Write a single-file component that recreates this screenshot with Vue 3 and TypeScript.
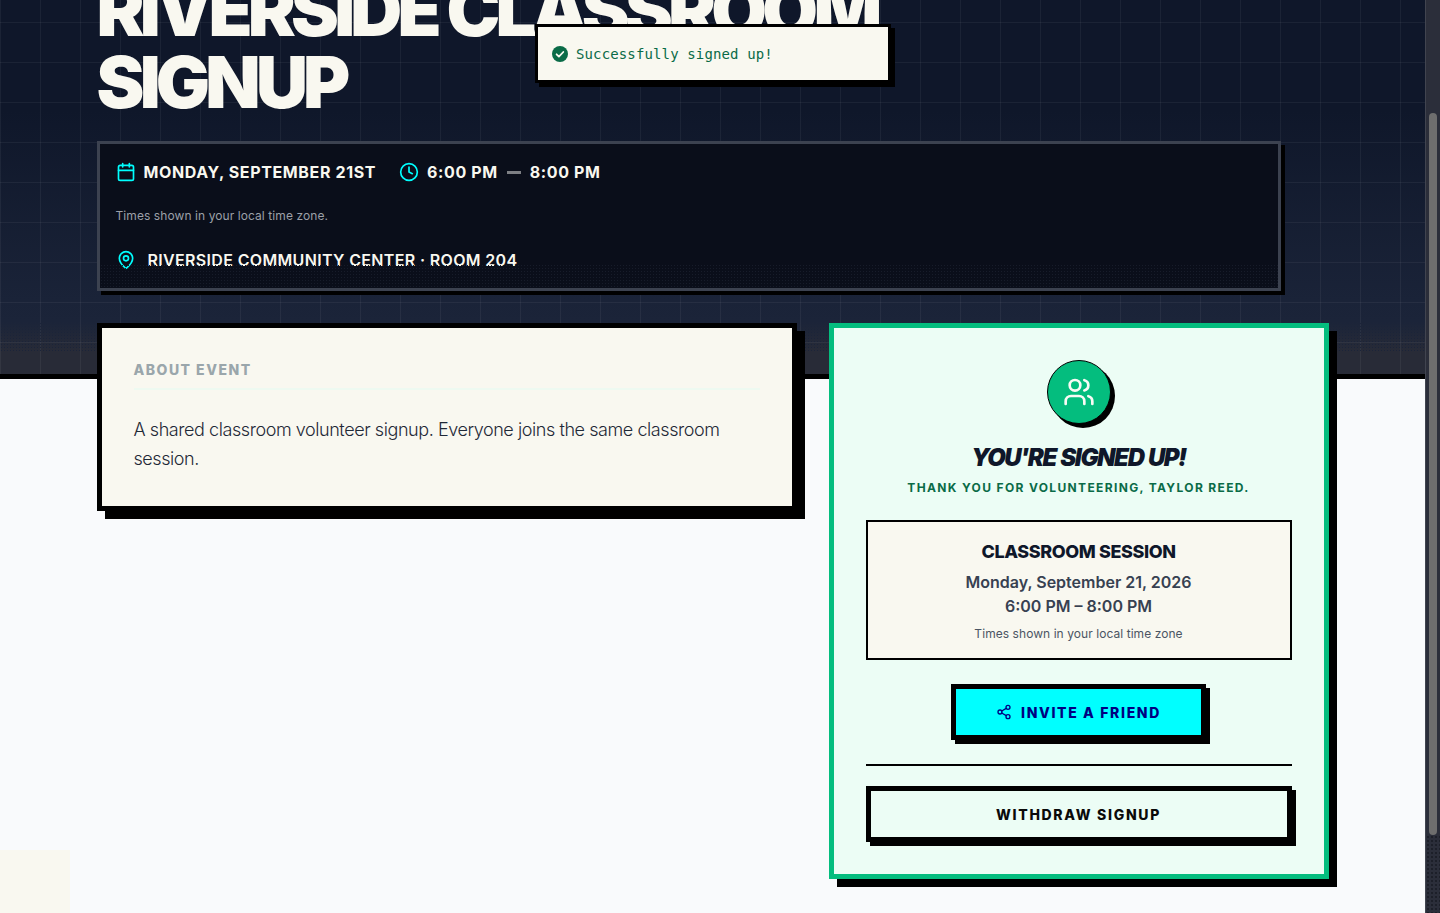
<template>
  <div class="viewport">
    <div class="page">
      <header class="hero">
        <div class="hero-inner">
          <h1 class="title">RIVERSIDE CLASSROOM SIGNUP</h1>
          <div class="info-box">
            <div class="info-row">
              <span class="info-item">
                <svg class="cyan-icon" width="20" height="20" viewBox="0 0 24 24" fill="none" stroke="currentColor" stroke-width="2" stroke-linecap="round" stroke-linejoin="round">
                  <path d="M8 2v4" /><path d="M16 2v4" /><rect x="3" y="4" width="18" height="18" rx="2" /><path d="M3 10h18" />
                </svg>
                MONDAY, SEPTEMBER 21ST
              </span>
              <span class="info-item time">
                <svg class="cyan-icon" width="20" height="20" viewBox="0 0 24 24" fill="none" stroke="currentColor" stroke-width="2" stroke-linecap="round" stroke-linejoin="round">
                  <circle cx="12" cy="12" r="10" /><path d="M12 6v6l4 2" />
                </svg>
                6:00 PM <i class="dash"></i> 8:00 PM
              </span>
            </div>
            <p class="tz">Times shown in your local time zone.</p>
            <div class="location">
              <svg class="cyan-icon" width="20" height="20" viewBox="0 0 24 24" fill="none" stroke="currentColor" stroke-width="2" stroke-linecap="round" stroke-linejoin="round">
                <path d="M20 10c0 5-5.5 10.2-7.4 11.8a1 1 0 0 1-1.2 0C9.5 20.2 4 15 4 10a8 8 0 0 1 16 0" /><circle cx="12" cy="10" r="3" />
              </svg>
              RIVERSIDE COMMUNITY CENTER · ROOM 204
            </div>
          </div>
        </div>
      </header>

      <main class="columns">
        <section class="about">
          <h2 class="about-head">ABOUT EVENT</h2>
          <p class="about-text">A shared classroom volunteer signup. Everyone joins the same classroom session.</p>
        </section>

        <section class="signed">
          <div class="avatar">
            <svg width="32" height="32" viewBox="0 0 24 24" fill="none" stroke="currentColor" stroke-width="2" stroke-linecap="round" stroke-linejoin="round">
              <path d="M16 21v-2a4 4 0 0 0-4-4H6a4 4 0 0 0-4 4v2" /><circle cx="9" cy="7" r="4" /><path d="M22 21v-2a4 4 0 0 0-3-3.87" /><path d="M16 3.13a4 4 0 0 1 0 7.75" />
            </svg>
          </div>
          <h3 class="signed-title">YOU'RE SIGNED UP!</h3>
          <p class="signed-sub">THANK YOU FOR VOLUNTEERING, TAYLOR REED.</p>
          <div class="session">
            <div class="session-name">CLASSROOM SESSION</div>
            <div class="session-line first">Monday, September 21, 2026</div>
            <div class="session-line">6:00 PM – 8:00 PM</div>
            <div class="session-tz">Times shown in your local time zone</div>
          </div>
          <button class="invite">
            <svg width="16" height="16" viewBox="0 0 24 24" fill="none" stroke="currentColor" stroke-width="2" stroke-linecap="round" stroke-linejoin="round">
              <circle cx="18" cy="5" r="3" /><circle cx="6" cy="12" r="3" /><circle cx="18" cy="19" r="3" /><path d="M8.59 13.51l6.83 3.98" /><path d="M15.41 6.51l-6.82 3.98" />
            </svg>
            INVITE A FRIEND
          </button>
          <hr class="rule" />
          <button class="withdraw">WITHDRAW SIGNUP</button>
        </section>
      </main>

      <div class="corner"></div>
      <div class="toast">
        <svg width="18" height="18" viewBox="0 0 18 18">
          <circle cx="9" cy="9" r="8" fill="#0a6b47" />
          <path d="M5.6 9.3l2.3 2.3 4.4-4.6" fill="none" stroke="#f9f8f0" stroke-width="1.8" stroke-linecap="round" stroke-linejoin="round" />
        </svg>
        <span>Successfully signed up!</span>
      </div>
    </div>
    <div class="scrollbar"><div class="thumb"></div></div>
  </div>
</template>

<script setup lang="ts">
// static screen, nothing to wire up
</script>

<style>
html, body { margin: 0; overflow: hidden; }
</style>

<style scoped>
.viewport {
  display: flex;
  height: 913px;
  overflow: hidden;
  font-family: Inter, "Liberation Sans", sans-serif;
  background: #f9fafc;
}

.page {
  position: relative;
  flex: 1;
  min-width: 0;
}

.scrollbar {
  position: relative;
  width: 15px;
  box-sizing: border-box;
  background: #2b2e3a;
  border-left: 1px solid #41444f;
  padding: 113px 3px 0;
}

/* the halftone shows through below the thumb */
.scrollbar::after {
  content: "";
  position: absolute;
  left: 0;
  right: 0;
  top: 835px;
  bottom: 0;
  background-image: radial-gradient(circle, #1c1f29 0.7px, transparent 1px);
  background-size: 4px 4px;
}

.thumb {
  width: 8px;
  height: 722px;
  border-radius: 4px;
  background: #6e6e6e;
}

.hero {
  position: relative;
  height: 374px;
  border-bottom: 5px solid #000;
  background-color: #0f172a;
  background-image:
    linear-gradient(rgba(255, 255, 255, 0.05) 1px, transparent 1px),
    linear-gradient(90deg, rgba(255, 255, 255, 0.05) 1px, transparent 1px),
    linear-gradient(180deg, #0f172a 0, #0f172a 110px, #1a2338 300px, #1b2439 322px, #282b37 352px, #282b37 374px);
  background-size: 40px 40px, 40px 40px, 100% 100%;
  background-position: 0 22px, 0 0, 0 0;
}

.hero::after {
  content: "";
  position: absolute;
  left: 0;
  right: 0;
  top: 322px;
  height: 30px;
  background-image: radial-gradient(circle, #1b2439 0.7px, transparent 1px);
  background-size: 3px 3px;
}

.hero-inner {
  width: 1232px;
  margin: 0 auto;
  padding-top: 1px;
}

.title {
  margin: -27px 0 23px;
  width: 860px;
  font-size: 72px;
  line-height: 72px;
  font-weight: 900;
  letter-spacing: -4.8px;
  color: #f9f8f0;
}

.info-box {
  position: relative;
  width: 1184px;
  height: 150px;
  box-sizing: border-box;
  padding: 16px 16px 0;
  background: #0a0e1a;
  border: 3px solid #3c4250;
  box-shadow: 4px 4px 0 #000;
  color: #f9f8f0;
}

.info-box::after {
  content: "";
  position: absolute;
  left: 0;
  right: 0;
  bottom: 0;
  height: 24px;
  background-image: radial-gradient(circle, #171c2a 0.6px, transparent 1px);
  background-size: 3px 3px;
}

.info-row {
  display: flex;
  gap: 23px;
}

.info-item {
  display: flex;
  align-items: center;
  gap: 8px;
  font-size: 16px;
  line-height: 24px;
  font-weight: 700;
  letter-spacing: 0.62px;
}

.cyan-icon {
  color: #00ffff;
  flex: none;
}

.dash {
  display: block;
  width: 14px;
  height: 3px;
  margin: 0 1px;
  background: #7d7f84;
}

.tz {
  margin: 24px 0 0;
  font-size: 12px;
  line-height: 16px;
  letter-spacing: 0.08px;
  color: #9ca0a8;
}

.location {
  display: flex;
  align-items: center;
  gap: 12px;
  margin-top: 24px;
  font-size: 16px;
  line-height: 24px;
  font-weight: 600;
  letter-spacing: 0.34px;
}

.columns {
  display: grid;
  grid-template-columns: 700px 500px;
  gap: 32px;
  align-items: start;
  width: 1232px;
  margin: -56px auto 0;
  position: relative;
  z-index: 1;
}

.about {
  box-sizing: border-box;
  height: 188px;
  padding: 32px;
  background: #f9f8f0;
  border: 5px solid #000;
  box-shadow: 8px 8px 0 #000;
}

.about-head {
  margin: 0 0 25px;
  padding-bottom: 8px;
  border-bottom: 2px solid #eefaf1;
  font-size: 14px;
  line-height: 20px;
  font-weight: 800;
  letter-spacing: 1.5px;
  color: #9aa6ab;
}

.about-text {
  margin: 0;
  font-size: 18px;
  line-height: 29px;
  font-weight: 300;
  letter-spacing: -0.43px;
  color: #1f2937;
}

.signed {
  box-sizing: border-box;
  height: 556px;
  padding: 32px;
  background: #ecfdf5;
  border: 5px solid #04bd7e;
  box-shadow: 8px 8px 0 #000;
  text-align: center;
}

.avatar {
  display: flex;
  align-items: center;
  justify-content: center;
  width: 64px;
  height: 64px;
  margin: 0 auto 18px;
  box-sizing: border-box;
  border-radius: 50%;
  border: 1px solid #000;
  background: #04bd7e;
  color: #f9fbf5;
  box-shadow: 4px 4px 0 #000;
}

.signed-title {
  margin: 0;
  font-size: 24px;
  line-height: 32px;
  font-weight: 900;
  font-style: italic;
  letter-spacing: -1.42px;
  word-spacing: 1px;
  color: #0f172a;
}

.signed-sub {
  margin: 6px 0 24px;
  font-size: 12px;
  line-height: 16px;
  font-weight: 700;
  letter-spacing: 1.35px;
  color: #0a6b47;
}

.session {
  box-sizing: border-box;
  height: 140px;
  padding: 18px 16px 0;
  background: #f9f8f0;
  border: 2px solid #000;
}

.session-name {
  font-size: 18px;
  line-height: 24px;
  font-weight: 800;
  letter-spacing: -0.4px;
  color: #0f172a;
}

.session-line {
  font-size: 16px;
  line-height: 24px;
  font-weight: 600;
  color: #374151;
}

.session-line.first {
  margin-top: 6px;
}

.session-tz {
  margin-top: 8px;
  font-size: 12px;
  line-height: 16px;
  letter-spacing: 0.06px;
  color: #4b5563;
}

.invite {
  display: flex;
  align-items: center;
  justify-content: center;
  gap: 9px;
  width: 255px;
  height: 56px;
  margin: 24px auto 0;
  box-sizing: border-box;
  background: #00ffff;
  border: 5px solid #000;
  box-shadow: 4px 4px 0 #000;
  font-family: inherit;
  font-size: 14px;
  font-weight: 800;
  letter-spacing: 1.65px;
  color: #000080;
}

.rule {
  margin: 24px 0 20px;
  border: 0;
  border-top: 2px solid #000;
}

.withdraw {
  display: block;
  width: 100%;
  height: 56px;
  box-sizing: border-box;
  background: transparent;
  border: 5px solid #000;
  box-shadow: 4px 4px 0 #000;
  font-family: inherit;
  font-size: 14px;
  font-weight: 800;
  letter-spacing: 1.7px;
  color: #0a0a0a;
}

.corner {
  position: absolute;
  left: 0;
  top: 850px;
  width: 70px;
  height: 63px;
  background: #f9f8f0;
}

.toast {
  position: absolute;
  z-index: 2;
  left: 535px;
  top: 24px;
  display: flex;
  align-items: center;
  gap: 7px;
  width: 356px;
  height: 59px;
  padding-left: 13px;
  box-sizing: border-box;
  background: #f9f8f0;
  border: 3px solid #000;
  box-shadow: 4px 4px 0 #000;
  font-family: "DejaVu Sans Mono", monospace;
  font-size: 14px;
  letter-spacing: 0.13px;
  color: #0a6b47;
}
</style>
